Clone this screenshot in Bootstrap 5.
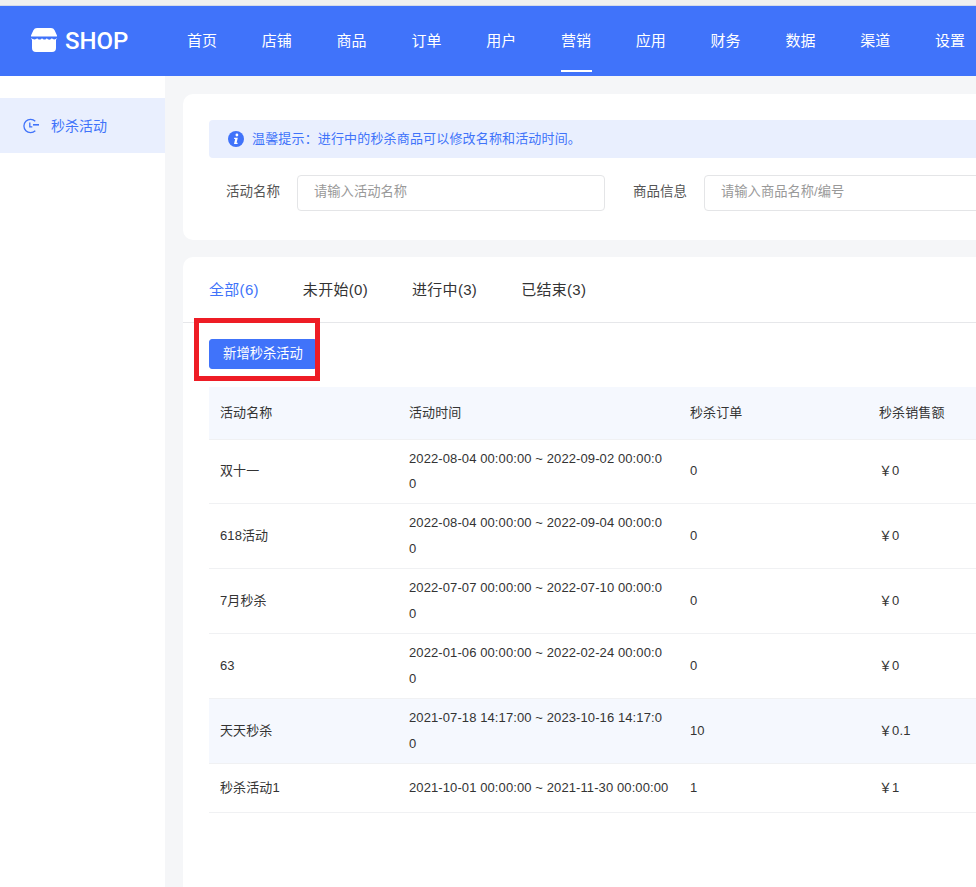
<!DOCTYPE html>
<html lang="zh-CN">
<head>
<meta charset="utf-8">
<title>秒杀活动</title>
<link href="https://cdn.jsdelivr.net/npm/bootstrap@5.3.0/dist/css/bootstrap.min.css" rel="stylesheet">
<style>
html,body{height:887px;overflow:hidden}
body{font-family:"Liberation Sans","Noto Sans CJK SC",sans-serif;background:#f5f6f8;color:#333;border-top:5px solid #f0f0f0}
.top-bar{height:71px;background:#4073fa;border-top:1px solid #d5dbe8;color:#fff;padding-left:31px;flex-wrap:nowrap}
.logo-box{width:156px;flex:none;gap:8px;font:500 24px Roboto,sans-serif;color:#fff}
.logo-box svg{margin-bottom:2px}
.top-link{width:74.8px;flex:none;height:100%;display:flex;align-items:center;color:#fff;text-decoration:none;font-size:15px;position:relative}
.top-link.on::after{content:"";position:absolute;left:0;width:31px;bottom:4px;height:2px;background:#fff}
.page-body{height:811px;width:1200px}
.side-menu{width:165px;flex:none;background:#fff;padding-top:22px}
.side-item{height:55px;background:#e9effe;color:#4073fa;font-size:14px;padding-left:23px;gap:12px}
.side-item span{padding-top:2px}
.content-area{padding:18px 0 0 18px;width:1035px;flex:none}
.panel-box{background:#fff;border-radius:10px;padding:0 26px}
.panel-search{height:146px;margin-bottom:17px;padding-top:26px}
.tip-box{height:38px;width:800px;background:#e9effe;border-radius:4px;color:#4073fa;font-size:13px;letter-spacing:.16px;padding-left:19px;gap:8px}
.filter-row{margin-top:17px;font-size:13.5px;color:#555;height:36px}
.filter-label{width:71px;flex:none;text-align:right;padding-bottom:2px}
.filter-input{height:36px;border:1px solid #e4e5e7;border-radius:4px;padding:0 16px 3px;font-size:13.3px;box-shadow:none;margin-left:17px}
.filter-input::placeholder{color:#999}
.name-input{width:308px;flex:none}
.label-goods{margin-left:7px;width:75px}
.goods-input{width:320px;flex:none}
.panel-list{height:640px}
.tab-row{height:66px;margin:0 -26px;padding:2px 26px 0;border-bottom:1px solid #e6e7ea;gap:44px;font-size:15px;letter-spacing:.3px}
.tab-item{color:#333;text-decoration:none}
.tab-item.on{color:#4073fa}
.add-btn{margin-top:16px;width:108px;height:30px;padding:0;background:#4073fa;border-color:#4073fa;font-size:13.3px;border-radius:3px}
.flash-table{table-layout:fixed;width:900px;margin:18px 0 0;font-size:13px;letter-spacing:.1px;color:#333;line-height:25.9px;--bs-table-bg:transparent}
.flash-table th,.flash-table td{padding:6px 11px;vertical-align:middle;font-weight:400;border-bottom:1px solid #f0f1f3;word-break:break-all;box-shadow:none}
.flash-table thead th{background:#f5f8fe;height:52px}
.flash-table tr.hi td{background:#f5f8fe}
.flash-table tr.one td{height:49px}
.flash-table tr.one td:nth-child(2){white-space:nowrap}
.c1{width:189px}.c2{width:281px}.c3{width:189px}.c4{width:241px}
.red-mark{position:absolute;left:194px;top:318px;width:126px;height:63px;border:5px solid #ee1c25;pointer-events:none}
</style>
</head>
<body>
<nav class="top-bar d-flex align-items-center">
  <div class="logo-box d-flex align-items-center">
    <svg width="26" height="24" viewBox="0 0 26 24" aria-hidden="true"><path fill="#fff" d="M6 0h14a4 4 0 0 1 3.600 2.300L26 7.500v2.200a2.600 2.600 0 0 1-1 2.100V20a4 4 0 0 1-4 4H5a4 4 0 0 1-4-4v-8.200a2.600 2.600 0 0 1-1-2.100V7.500l2.400-5.200A4 4 0 0 1 6 0z"/><path fill="#4073fa" d="M0 8.500h26v1.800c-1.800 1.600-4 1.400-5.200 0-1.200 1.800-3.800 1.800-5 0-1 1.700-3.500 1.700-4.800 0-1.100 1.700-3.700 1.700-4.800 0-1.200 1.500-3.800 1.500-6.200 0z"/></svg>
    <span>SHOP</span>
  </div>
  <a class="top-link" href="#">首页</a><a class="top-link" href="#">店铺</a><a class="top-link" href="#">商品</a><a class="top-link" href="#">订单</a><a class="top-link" href="#">用户</a><a class="top-link on" href="#">营销</a><a class="top-link" href="#">应用</a><a class="top-link" href="#">财务</a><a class="top-link" href="#">数据</a><a class="top-link" href="#">渠道</a><a class="top-link" href="#">设置</a>
</nav>
<div class="page-body d-flex">
  <aside class="side-menu">
    <div class="side-item d-flex align-items-center">
      <svg width="16" height="16" viewBox="0 0 16 16" fill="none" stroke="#4073fa" stroke-width="1.300" aria-hidden="true"><path d="M12.300 3.200A6.700 6.700 0 1 0 12.300 12.800"/><path d="M6.800 4.500v4.300h2.500"/><path d="M10 6.800h6" stroke-width="1.600"/></svg>
      <span>秒杀活动</span>
    </div>
  </aside>
  <main class="content-area">
    <section class="panel-box panel-search">
      <div class="tip-box d-flex align-items-center">
        <svg width="16" height="16" viewBox="0 0 16 16" aria-hidden="true"><circle cx="8" cy="8" r="8" fill="#4073fa"/><circle cx="8.900" cy="4" r="1.400" fill="#fff"/><path d="M6.300 6.800h3.500L8.600 11.800h1v1.100H6L7.200 7.900H6z" fill="#fff"/></svg>
        <span>温馨提示：进行中的秒杀商品可以修改名称和活动时间。</span>
      </div>
      <div class="filter-row d-flex align-items-center">
        <span class="filter-label">活动名称</span>
        <input class="form-control filter-input name-input" placeholder="请输入活动名称">
        <span class="filter-label label-goods">商品信息</span>
        <input class="form-control filter-input goods-input" placeholder="请输入商品名称/编号">
      </div>
    </section>
    <section class="panel-box panel-list">
      <div class="tab-row d-flex align-items-center">
        <a class="tab-item on" href="#">全部(6)</a><a class="tab-item" href="#">未开始(0)</a><a class="tab-item" href="#">进行中(3)</a><a class="tab-item" href="#">已结束(3)</a>
      </div>
      <button class="btn btn-primary add-btn d-block" type="button">新增秒杀活动</button>
      <table class="table flash-table">
        <colgroup><col class="c1"><col class="c2"><col class="c3"><col class="c4"></colgroup>
        <thead><tr><th>活动名称</th><th>活动时间</th><th>秒杀订单</th><th>秒杀销售额</th></tr></thead>
        <tbody>
          <tr><td>双十一</td><td>2022-08-04 00:00:00 ~ 2022-09-02 00:00:0<br>0</td><td>0</td><td>￥0</td></tr>
          <tr><td>618活动</td><td>2022-08-04 00:00:00 ~ 2022-09-04 00:00:0<br>0</td><td>0</td><td>￥0</td></tr>
          <tr><td>7月秒杀</td><td>2022-07-07 00:00:00 ~ 2022-07-10 00:00:0<br>0</td><td>0</td><td>￥0</td></tr>
          <tr><td>63</td><td>2022-01-06 00:00:00 ~ 2022-02-24 00:00:0<br>0</td><td>0</td><td>￥0</td></tr>
          <tr class="hi"><td>天天秒杀</td><td>2021-07-18 14:17:00 ~ 2023-10-16 14:17:0<br>0</td><td>10</td><td>￥0.1</td></tr>
          <tr class="one"><td>秒杀活动1</td><td>2021-10-01 00:00:00 ~ 2021-11-30 00:00:00</td><td>1</td><td>￥1</td></tr>
        </tbody>
      </table>
    </section>
  </main>
</div>
<div class="red-mark"></div>
</body>
</html>
